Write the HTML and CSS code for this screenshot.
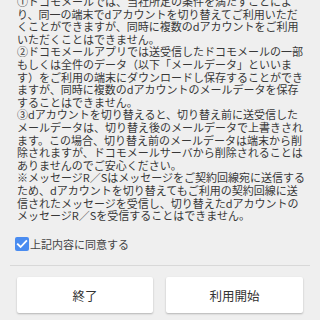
FILE: index.html
```html
<!DOCTYPE html>
<html lang="ja">
<head>
<meta charset="utf-8">
<link rel="stylesheet" href="styles.css">
</head>
<body>
<div class="page">
  <div class="scroll">
    <div class="text">
      ①ドコモメールでは、当社所定の条件を満たすことによ<br>
      り、同一の端末でdアカウントを切り替えてご利用いただ<br>
      くことができますが、同時に複数のdアカウントをご利用<br>
      いただくことはできません。<br>
      ②ドコモメールアプリでは送受信したドコモメールの一部<br>
      もしくは全件のデータ（以下「メールデータ」といいま<br>
      す）をご利用の端末にダウンロードし保存することができ<br>
      ますが、同時に複数のdアカウントのメールデータを保存<br>
      することはできません。<br>
      ③dアカウントを切り替えると、切り替え前に送受信した<br>
      メールデータは、切り替え後のメールデータで上書きされ<br>
      ます。この場合、切り替え前のメールデータは端末から削<br>
      除されますが、ドコモメールサーバから削除されることは<br>
      ありませんのでご安心ください。<br>
      ※メッセージR／Sはメッセージをご契約回線宛に送信する<br>
      ため、dアカウントを切り替えてもご利用の契約回線に送<br>
      信されたメッセージを受信し、切り替えたdアカウントの<br>
      メッセージR／Sを受信することはできません。
    </div>
  </div>
  <label class="agree">
    <svg class="check" width="14" height="14" viewBox="0 0 14 14">
      <rect x="0" y="0" width="14" height="14" rx="2" fill="#4a8cf0"/>
      <path d="M2.8 7.2 L5.6 10 L11.3 4" fill="none" stroke="#fff" stroke-width="1.8" stroke-linecap="square"/>
    </svg>
    <span>上記内容に同意する</span>
  </label>
  <div class="divider"></div>
  <div class="buttons">
    <button class="btn">終了</button>
    <button class="btn">利用開始</button>
  </div>
</div>
</body>
</html>
```
FILE: styles.css
```css
html, body {
  margin: 0;
  padding: 0;
  background: #efefef;
}
.page {
  width: 320px;
  height: 320px;
  display: flex;
  flex-direction: column;
  font-family: "Noto Sans CJK JP", "DejaVu Sans", sans-serif;
  color: #333;
  overflow: hidden;
}
.scroll {
  height: 226px;
  overflow: hidden;
  flex: none;
}
.text {
  margin-top: -5px;
  padding: 0 0 0 17px;
  font-size: 11px;
  line-height: 12.6px;
  white-space: nowrap;
  color: #383838;
}
.agree {
  display: flex;
  align-items: center;
  gap: 1px;
  margin: 11px 0 0 15px;
  height: 14px;
  font-size: 11px;
  color: #444;
}
.check {
  display: block;
  flex: none;
}
.divider {
  margin: 14px 10px 0 10px;
  border-top: 1px solid #d8d8d8;
}
.buttons {
  display: grid;
  grid-template-columns: 136px 137px;
  column-gap: 13px;
  padding: 11px 17px 0 17px;
}
.btn {
  height: 36px;
  border: none;
  border-radius: 2px;
  background: #fff;
  box-shadow: 0 1px 2px rgba(0,0,0,0.25);
  font-family: "Noto Sans CJK JP", sans-serif;
  font-size: 12.5px;
  color: #333;
  padding: 0;
}
```
